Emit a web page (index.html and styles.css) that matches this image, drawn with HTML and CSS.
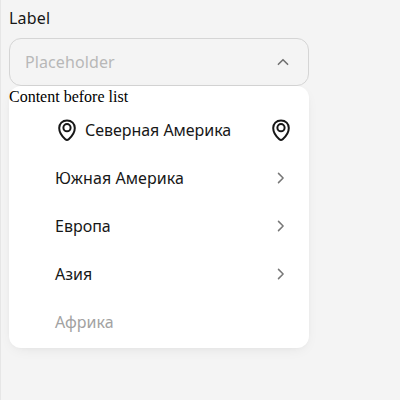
FILE: index.html
```
<!DOCTYPE html>
<html lang="ru">
<head>
<meta charset="utf-8">
<title>Select</title>
<link rel="stylesheet" href="styles.css">
</head>
<body>
<svg class="defs" width="0" height="0">
  <symbol id="pin" viewBox="0 0 24 24"><path d="M12 2.400c-4.700 0-7.800 3.300-7.800 7.600 0 4.700 3.500 8.900 6.100 11.200 1 .9 2.400.9 3.400 0 2.600-2.300 6.100-6.500 6.100-11.200 0-4.300-3.100-7.600-7.800-7.600Z"/><circle cx="12" cy="9.700" r="3.600"/></symbol>
  <symbol id="chevron" viewBox="0 0 16 16"><path d="m5.500 3.400 4.600 4.600-4.600 4.600"/></symbol>
</svg>
<div class="select">
  <label class="label"><span class="caption">Label</span></label>
  <div class="field">
    <span class="placeholder">Placeholder</span>
    <svg class="arrow" viewBox="0 0 16 16"><path d="m3.400 10.300 4.600-4.600 4.600 4.600"/></svg>
  </div>
  <div class="menu">
    <div class="before">Content before list</div>
    <ul class="list">
      <li class="item with-icon"><svg class="pin"><use href="#pin"/></svg><span class="text">Северная Америка</span><svg class="pin"><use href="#pin"/></svg></li>
      <li class="item"><span class="text south">Южная Америка</span><svg class="chevron"><use href="#chevron"/></svg></li>
      <li class="item"><span class="text">Европа</span><svg class="chevron"><use href="#chevron"/></svg></li>
      <li class="item"><span class="text">Азия</span><svg class="chevron"><use href="#chevron"/></svg></li>
      <li class="item disabled"><span class="text">Африка</span></li>
    </ul>
  </div>
</div>
</body>
</html>
```
FILE: styles.css
```
* { box-sizing: border-box; }
html { background: #f4f4f4; }
body {
  margin: 0;
  height: 400px;
  padding: 8px;
  overflow: hidden;
  border-left: 1px solid #e6e6e6;
  background: #f4f4f4;
  color: #171717;
  font: 16px/22px "Noto Sans", "Open Sans", sans-serif;
}
.defs { position: absolute; }
.select { width: 300px; }
.label { display: block; height: 30px; line-height: 20px; }
.caption { letter-spacing: .2px; }
.field {
  display: flex;
  align-items: center;
  justify-content: space-between;
  height: 48px;
  padding: 0 17px 0 15px;
  border: 1px solid #d5d5d5;
  border-radius: 12px;
}
.placeholder { color: #b8b8b8; letter-spacing: .1px; }
.arrow { width: 16px; height: 16px; fill: none; stroke: #707070; stroke-width: 1.6; stroke-linecap: round; stroke-linejoin: round; }
.menu {
  height: 262px;
  border-radius: 12px;
  background: #fff;
  box-shadow: 0 4px 14px -4px rgba(8, 8, 8, .08), 0 1px 4px -1px rgba(8, 8, 8, .03);
}
.before { height: 20px; color: #000; font: 16px/21px "Liberation Serif", serif; }
.list { margin: 0; padding: 0; list-style: none; }
.item { display: flex; align-items: center; height: 48px; padding: 0 20px 0 46px; }
.with-icon { padding-right: 16px; }
.text { flex: 1; white-space: nowrap; }
.south { letter-spacing: .07px; }
.pin { width: 24px; height: 24px; fill: none; stroke: #171717; stroke-width: 2; }
.with-icon .text { margin-left: 6px; letter-spacing: -.04px; }
.chevron { width: 16px; height: 16px; fill: none; stroke: #777; stroke-width: 1.5; stroke-linecap: round; stroke-linejoin: round; }
.disabled { color: #a2a2a2; }
```
